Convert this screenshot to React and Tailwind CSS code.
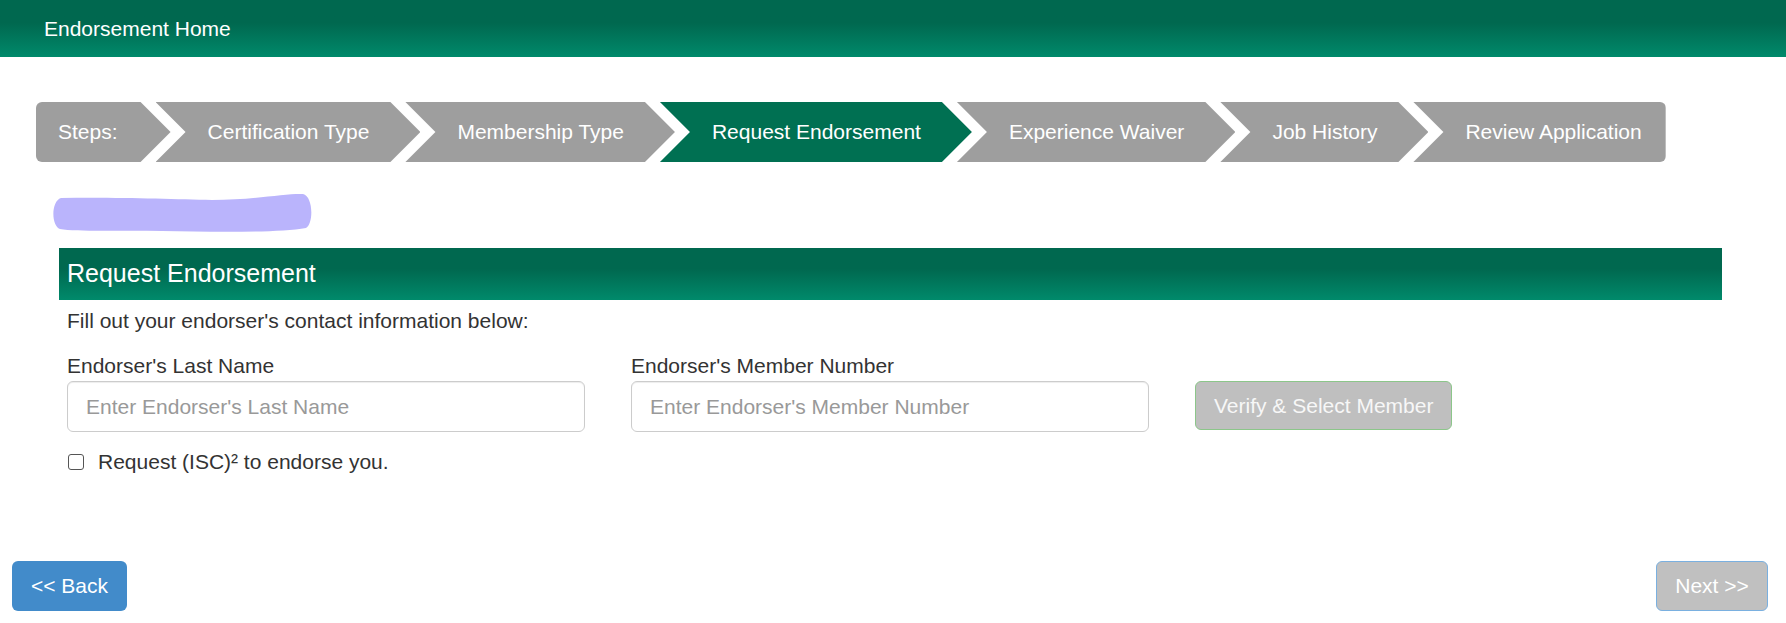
import React from 'react';

const STEPS = [
  { label: 'Steps:', kind: 'first' },
  { label: 'Certification Type', kind: 'mid' },
  { label: 'Membership Type', kind: 'mid' },
  { label: 'Request Endorsement', kind: 'active' },
  { label: 'Experience Waiver', kind: 'mid' },
  { label: 'Job History', kind: 'mid' },
  { label: 'Review Application', kind: 'last' },
];

const STEP_CLASSES = {
  first:
    'bg-[#9e9e9e] rounded-l-[6px] pl-[22px] pr-[53px] [clip-path:polygon(0_0,calc(100%_-_30px)_0,100%_50%,calc(100%_-_30px)_100%,0_100%)]',
  mid:
    'bg-[#9e9e9e] -ml-[15px] pl-[52px] pr-[51px] [clip-path:polygon(0_0,calc(100%_-_30px)_0,100%_50%,calc(100%_-_30px)_100%,0_100%,30px_50%)]',
  active:
    'bg-[#007052] -ml-[15px] pl-[52px] pr-[51px] [clip-path:polygon(0_0,calc(100%_-_30px)_0,100%_50%,calc(100%_-_30px)_100%,0_100%,30px_50%)]',
  last:
    'bg-[#9e9e9e] -ml-[15px] rounded-r-[6px] pl-[52px] pr-[24px] [clip-path:polygon(0_0,100%_0,100%_100%,0_100%,30px_50%)]',
};

function StepBar() {
  return (
    <nav className="mt-[45px] ml-[36px] flex h-[60px] text-white text-[21px]">
      {STEPS.map((s) => (
        <div key={s.label} className={`flex items-center whitespace-nowrap ${STEP_CLASSES[s.kind]}`}>
          {s.label}
        </div>
      ))}
    </nav>
  );
}

function Redacted() {
  // purple scribble hiding the applicant name
  return (
    <svg className="ml-[52px] mt-[31px] block" width="260" height="40" viewBox="0 0 260 40">
      <path
        d="M9 5 C60 4 120 6 160 7 C200 7 236 0 251 1 C261 3 262 30 254 35 C225 40 160 39 110 38 C70 37 25 39 8 36 C-1 33 -1 8 9 5 Z"
        fill="#bab4fc"
      />
    </svg>
  );
}

export default function App() {
  return (
    <div className="min-h-[623px] bg-white font-['Liberation_Sans',Arial,sans-serif] text-[#333]">
      {/* top bar */}
      <header className="h-[57px] bg-linear-to-b from-[#00684f] from-40% to-[#008a6b] flex items-center pl-[44px] text-white text-[21px]">
        Endorsement Home
      </header>

      <StepBar />
      <Redacted />

      {/* Request endorsement panel */}
      <section className="mt-[15px] ml-[59px] mr-[64px]">
        <div className="h-[52px] bg-linear-to-b from-[#00684f] from-40% to-[#008a6b] flex items-center pl-[8px] text-white text-[25px]">
          Request Endorsement
        </div>

        <div className="pl-[8px]">
          <p className="mt-[6px] text-[21px] leading-[30px]">Fill out your endorser's contact information below:</p>

          <div className="mt-[15px] flex items-end gap-[46px]">
            <div className="flex flex-col">
              <label className="text-[21px] leading-[30px]">Endorser's Last Name</label>
              <input
                placeholder="Enter Endorser's Last Name"
                className="w-[518px] h-[51px] border border-[#ccc] rounded-[6px] px-[18px] text-[21px] shadow-[inset_0_1px_1px_rgba(0,0,0,0.075)] placeholder:text-[#999] outline-none"
              />
            </div>
            <div className="flex flex-col">
              <label className="text-[21px] leading-[30px]">Endorser's Member Number</label>
              <input
                placeholder="Enter Endorser's Member Number"
                className="w-[518px] h-[51px] border border-[#ccc] rounded-[6px] px-[18px] text-[21px] shadow-[inset_0_1px_1px_rgba(0,0,0,0.075)] placeholder:text-[#999] outline-none"
              />
            </div>
            <button className="mb-[2px] h-[49px] px-[18px] bg-[#bfbfbf] border border-[#8cc68a] rounded-[6px] text-[#f7f7f7] text-[21px]">
              Verify &amp; Select Member
            </button>
          </div>

          <label className="mt-[15px] flex items-center h-[30px] text-[21px]">
            <span className="ml-[1px] w-[16px] h-[16px] border border-[#555] rounded-[3px] bg-white" />
            <span className="ml-[14px]">Request (ISC)² to endorse you.</span>
          </label>
        </div>
      </section>

      {/* footer nav */}
      <div className="mt-[84px] flex justify-between pl-[12px] pr-[18px]">
        <button className="w-[115px] h-[50px] bg-[#428bca] rounded-[6px] text-white text-[21px]">&lt;&lt; Back</button>
        <button className="w-[112px] h-[50px] bg-[#c0c0c0] border border-[#7ab0e0] rounded-[6px] text-white text-[21px]">
          Next &gt;&gt;
        </button>
      </div>
    </div>
  );
}
